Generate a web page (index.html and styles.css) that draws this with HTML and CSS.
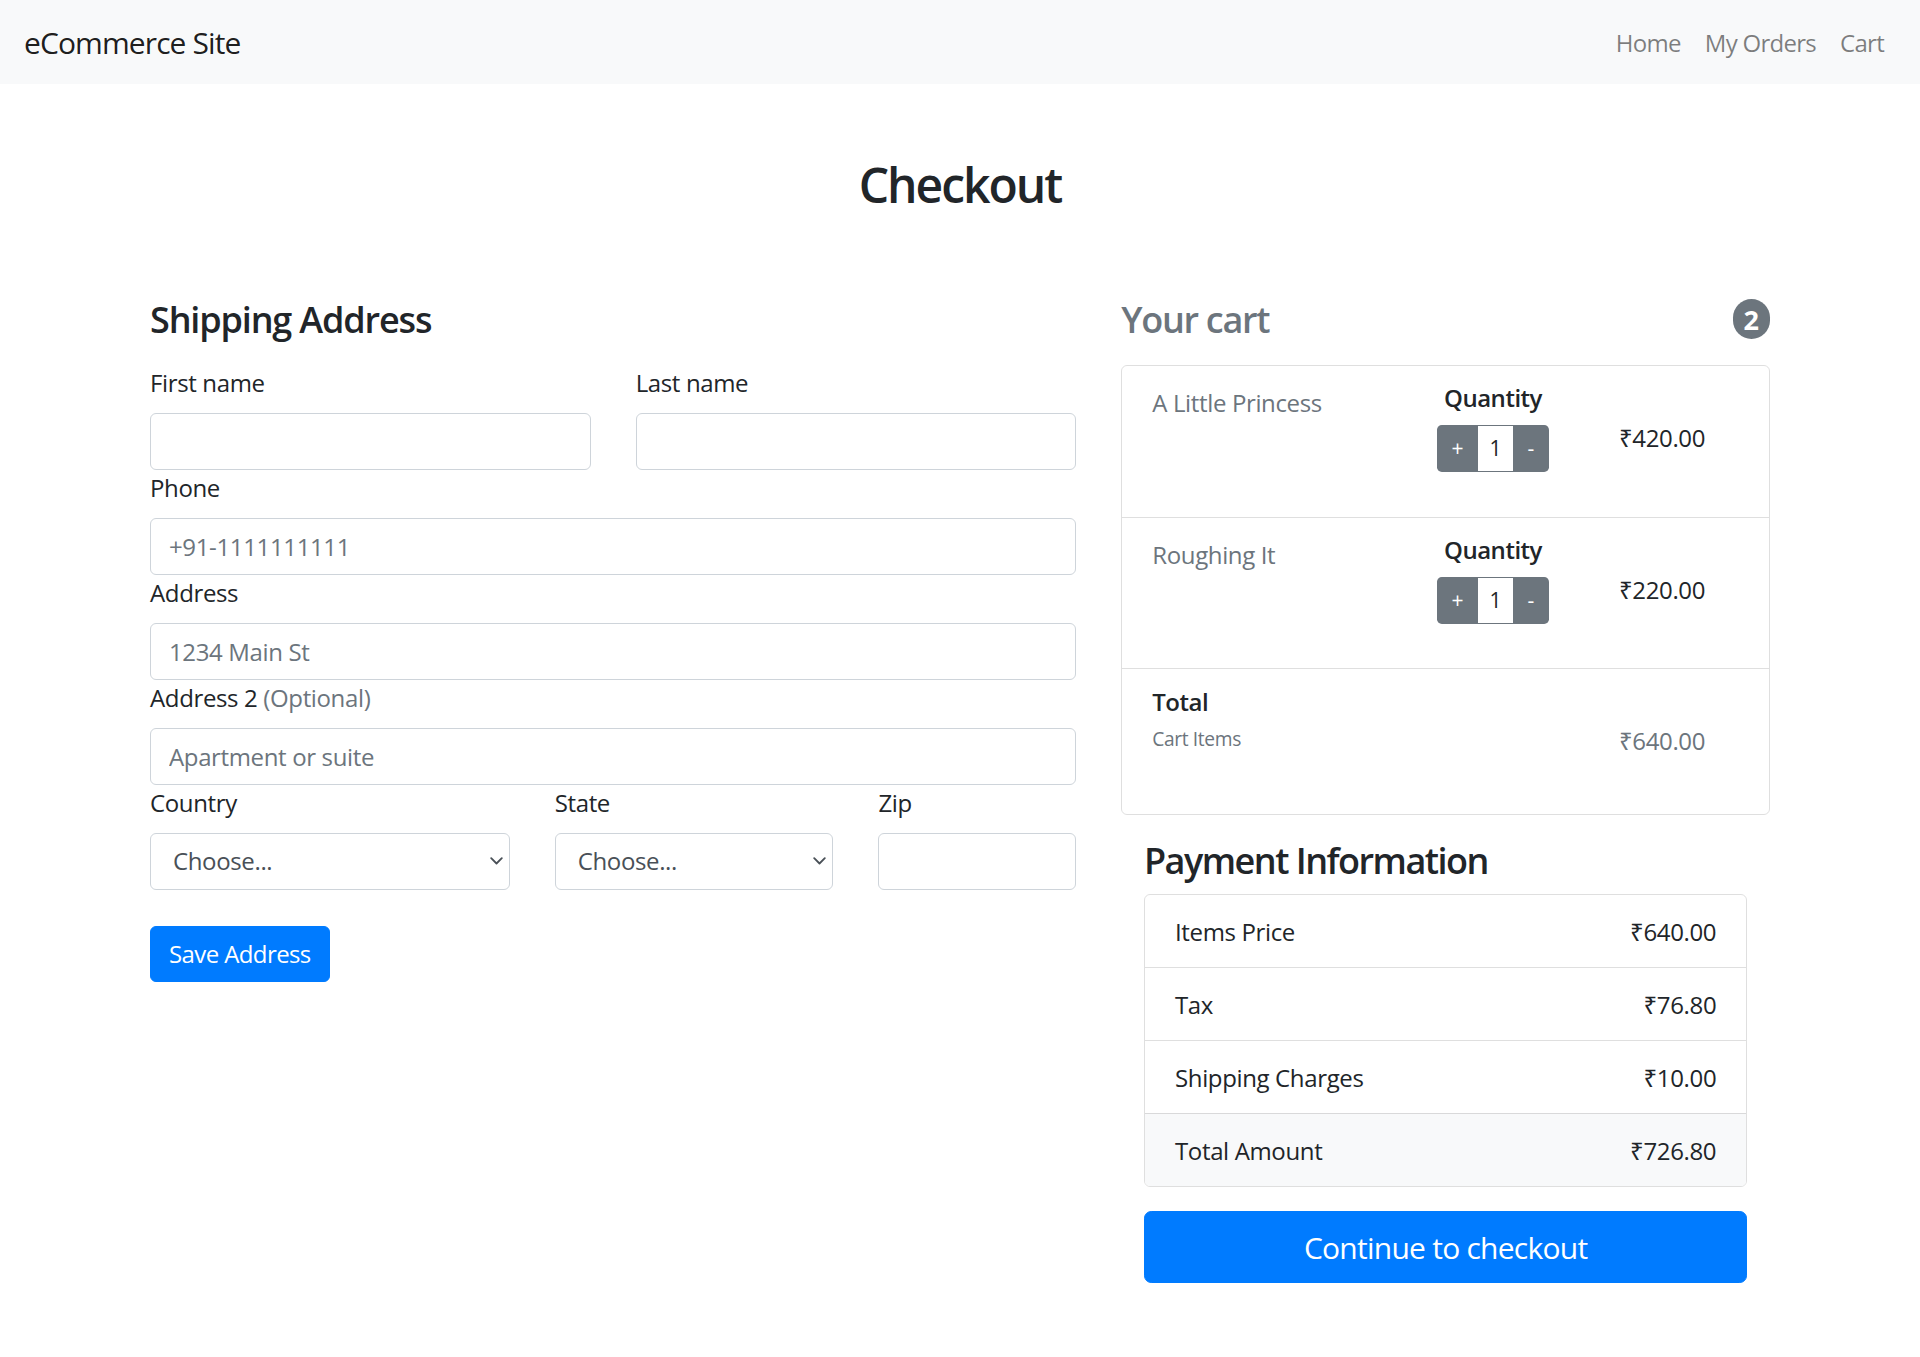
FILE: index.html
```html
<!DOCTYPE html>
<html lang="en">
<head>
<meta charset="utf-8">
<title>Checkout</title>
<link rel="stylesheet" href="styles.css">
</head>
<body>
<nav class="navbar">
  <a class="brand" href="#">eCommerce Site</a>
  <ul class="nav-links">
    <li><a href="#">Home</a></li>
    <li><a href="#">My Orders</a></li>
    <li><a href="#">Cart</a></li>
  </ul>
</nav>
<main class="container">
  <div class="page-head"><h2 class="page-title">Checkout</h2></div>
  <div class="checkout-row">
    <section class="col-form">
      <h4 class="section-title">Shipping Address</h4>
      <form class="address-form">
        <div class="grid-2">
          <div class="field"><label>First name</label><input class="form-control" type="text"></div>
          <div class="field"><label>Last name</label><input class="form-control" type="text"></div>
        </div>
        <div class="field"><label>Phone</label><input class="form-control" type="text" placeholder="+91-1111111111"></div>
        <div class="field"><label>Address</label><input class="form-control" type="text" placeholder="1234 Main St"></div>
        <div class="field"><label>Address 2 <span class="muted">(Optional)</span></label><input class="form-control" type="text" placeholder="Apartment or suite"></div>
        <div class="grid-3">
          <div class="field"><label>Country</label>
            <div class="select-wrap">
              <select class="form-control form-select"><option>Choose...</option></select>
              <svg class="chev" viewBox="0 0 13 8" aria-hidden="true"><path d="M1.2 1.2 L6.5 6.5 L11.8 1.2" fill="none" stroke="#495057" stroke-width="1.8" stroke-linecap="round" stroke-linejoin="round"/></svg>
            </div>
          </div>
          <div class="field"><label>State</label>
            <div class="select-wrap">
              <select class="form-control form-select"><option>Choose...</option></select>
              <svg class="chev" viewBox="0 0 13 8" aria-hidden="true"><path d="M1.2 1.2 L6.5 6.5 L11.8 1.2" fill="none" stroke="#495057" stroke-width="1.8" stroke-linecap="round" stroke-linejoin="round"/></svg>
            </div>
          </div>
          <div class="field"><label>Zip</label><input class="form-control" type="text"></div>
        </div>
        <button class="btn btn-primary save-btn" type="button">Save Address</button>
      </form>
    </section>
    <aside class="col-cart">
      <h4 class="cart-title"><span>Your cart</span><span class="badge">2</span></h4>
      <ul class="cart-list">
        <li class="cart-item">
          <div class="item-name">A Little Princess</div>
          <div class="item-qty">
            <h6 class="qty-label">Quantity</h6>
            <div class="qty-group"><button class="qty-btn qty-plus" type="button">+</button><input class="qty-input" type="text" value="1"><button class="qty-btn qty-minus" type="button">-</button></div>
          </div>
          <div class="item-price">₹420.00</div>
        </li>
        <li class="cart-item">
          <div class="item-name">Roughing It</div>
          <div class="item-qty">
            <h6 class="qty-label">Quantity</h6>
            <div class="qty-group"><button class="qty-btn qty-plus" type="button">+</button><input class="qty-input" type="text" value="1"><button class="qty-btn qty-minus" type="button">-</button></div>
          </div>
          <div class="item-price">₹220.00</div>
        </li>
        <li class="cart-item total-item">
          <div class="item-total">
            <h6 class="total-label">Total</h6>
            <small class="small-muted">Cart Items</small>
          </div>
          <div></div>
          <div class="item-price muted">₹640.00</div>
        </li>
      </ul>
      <div class="payment">
        <h4 class="payment-title">Payment Information</h4>
        <ul class="pay-list">
          <li class="pay-row"><span>Items Price</span><span>₹640.00</span></li>
          <li class="pay-row"><span>Tax</span><span>₹76.80</span></li>
          <li class="pay-row"><span>Shipping Charges</span><span>₹10.00</span></li>
          <li class="pay-row pay-total"><span>Total Amount</span><span>₹726.80</span></li>
        </ul>
        <button class="btn btn-primary btn-lg" type="button">Continue to checkout</button>
      </div>
    </aside>
  </div>
</main>
</body>
</html>
```

FILE: styles.css
```css
*, *::before, *::after { box-sizing: border-box; }
html, body { margin: 0; }
body {
  font-family: "Open Sans", "Noto Sans", "DejaVu Sans", sans-serif;
  font-size: 24px;
  line-height: 1.5;
  color: #212529;
  background: #fff;
  letter-spacing: -0.015em;
}
h2, h4, h6 { margin: 0; font-weight: 600; line-height: 1.2; letter-spacing: -0.036em; }
ul { list-style: none; margin: 0; padding: 0; }
a { text-decoration: none; }
.muted { color: #6c757d; }

/* navbar */
.navbar {
  display: flex;
  align-items: center;
  justify-content: space-between;
  height: 84px;
  padding: 12px 24px;
  background: #f8f9fa;
}
.brand { font-size: 30px; line-height: 45px; color: rgba(0,0,0,.9); letter-spacing: -0.03em; padding-top: 1px; }
.nav-links { display: flex; }
.nav-links a { display: block; padding: 13px 12px 11px; line-height: 36px; color: rgba(0,0,0,.5); letter-spacing: -0.03em; }

/* container */
.container { width: 1620px; margin: 0 auto; }
.page-head { padding: 72px 0; text-align: center; }
.page-title { font-size: 48px; margin-bottom: 12px; padding-top: 1px; margin-top: -1px; letter-spacing: -0.042em; }

.checkout-row {
  display: grid;
  grid-template-columns: 926.25px 648.75px;
  column-gap: 45px;
  align-items: start;
  padding-bottom: 72px;
}

/* form */
.section-title { font-size: 36px; margin-bottom: 24px; letter-spacing: -0.032em; }
.field label { display: block; margin-bottom: 12px; line-height: 36px; padding-top: 1px; margin-top: -1px; }
.form-control {
  display: block;
  width: 100%;
  height: 57px;
  padding: 9px 18px;
  font: inherit;
  letter-spacing: inherit;
  color: #495057;
  background: #fff;
  border: 1px solid #ced4da;
  border-radius: 6px;
  outline: none;
}
.form-control::placeholder { color: #6c757d; opacity: 1; }
.grid-2 { display: grid; grid-template-columns: 1fr 1fr; column-gap: 45px; }
.grid-3 { display: grid; grid-template-columns: 359.7fr 278.7fr 197.85fr; column-gap: 45px; }
.select-wrap { position: relative; }
.form-select { appearance: none; -webkit-appearance: none; padding-left: 22px; padding-right: 36px; }
.chev { position: absolute; right: 7px; top: 50%; width: 13px; height: 8px; margin-top: -4px; pointer-events: none; }

.btn { font: inherit; letter-spacing: inherit; border: 1px solid transparent; border-radius: 6px; cursor: pointer; }
.btn-primary { color: #fff; background: #007bff; border-color: #007bff; }
.save-btn { display: inline-block; margin-top: 36px; height: 56px; padding: 9px 18px; line-height: 36px; letter-spacing: -0.025em; }

/* cart */
.cart-title {
  display: flex;
  justify-content: space-between;
  align-items: center;
  font-size: 36px;
  color: #6c757d;
  margin-bottom: 24px;
}
.badge {
  display: inline-block;
  font-size: 27px;
  font-weight: 700;
  line-height: 1;
  padding: 6.75px 11px;
  border-radius: 270px;
  background: #6c757d;
  color: #fff;
  letter-spacing: 0;
}
.cart-list { border: 1px solid rgba(0,0,0,.125); border-radius: 6px; margin-bottom: 24px; }
.cart-item {
  display: grid;
  grid-template-columns: 1fr 184px 154px;
  padding: 18px 30px;
  min-height: 151px;
}
.cart-item + .cart-item { border-top: 1px solid rgba(0,0,0,.125); }
.total-item { min-height: 146px; }
.item-name { color: #6c757d; line-height: 36px; padding-top: 1px; }
.item-qty { text-align: center; }
.qty-label { font-size: 24px; font-weight: 600; line-height: 28.8px; margin-bottom: 12px; letter-spacing: -0.02em; }
.qty-group {
  display: inline-flex;
  height: 47px;
  background: #6c757d;
  border-radius: 4.8px;
  overflow: hidden;
  vertical-align: top;
}
.qty-btn {
  border: 0;
  padding: 0;
  background: transparent;
  color: #fff;
  font-family: inherit;
  font-size: 21px;
  line-height: 1;
  cursor: pointer;
}
.qty-plus { width: 41px; }
.qty-minus { width: 36px; }
.qty-input {
  width: 35px;
  height: 45px;
  margin: 1px 0;
  border: 0;
  padding: 0;
  text-align: center;
  font-family: inherit;
  font-size: 21px;
  color: #212529;
  background: #fff;
  outline: none;
}
.item-price { text-align: center; padding-top: 36.7px; line-height: 36px; }
.total-label { font-size: 24px; font-weight: 600; line-height: 28.8px; margin-bottom: 8px; letter-spacing: -0.02em; padding-top: 1px; }
.small-muted { display: block; font-size: 19.2px; line-height: 28.8px; color: #6c757d; }

/* payment */
.payment { padding: 0 22.75px; }
.payment-title { font-size: 36px; margin-bottom: 12px; letter-spacing: -0.042em; }
.pay-list { border: 1px solid rgba(0,0,0,.125); border-radius: 6px; overflow: hidden; margin-bottom: 24px; }
.pay-row { display: flex; justify-content: space-between; padding: 19px 30px 17px; line-height: 36px; }
.pay-row + .pay-row { border-top: 1px solid rgba(0,0,0,.125); }
.pay-total { background: #f8f9fa; }
.btn-lg {
  display: block;
  width: 100%;
  height: 72px;
  padding: 13px 24px 11px;
  font-size: 30px;
  line-height: 45px;
  border-radius: 7.2px;
  letter-spacing: -0.025em;
}
```
